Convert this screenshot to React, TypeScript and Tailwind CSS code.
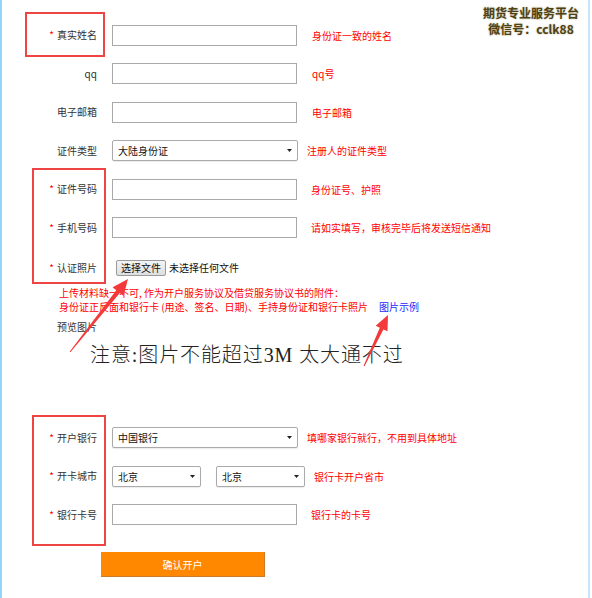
import React from "react";

const cjk = { fontFamily: '"Noto Sans CJK SC", "Liberation Sans", sans-serif' };

function Star() {
  return <span className="text-[#f00] mr-[3px] text-[10px]">*</span>;
}

function Label({ text, star }: { text: string; star?: boolean }) {
  return (
    <div className="w-[95px] shrink-0 text-right text-[10px] text-[#333] leading-none">
      {star && <Star />}
      {text}
    </div>
  );
}

function TextBox({ w = 185 }: { w?: number }) {
  return <div className="h-[21px] border border-[#a9a9a9] bg-white" style={{ width: w }} />;
}

function SelectBox({ value, w = 186 }: { value: string; w?: number }) {
  return (
    <div
      className="h-[21px] flex items-center justify-between pl-[5px] pr-[5px] border border-[#aaa] rounded-[2px] bg-white shadow-[0_1px_1px_rgba(0,0,0,0.08)]"
      style={{ width: w }}
    >
      <span className="text-[10px] text-[#111]">{value}</span>
      <svg width="5" height="3" viewBox="0 0 5 3">
        <path d="M0 0 L5 0 L2.5 3 Z" fill="#222" />
      </svg>
    </div>
  );
}

function Hint({ text, ml }: { text: string; ml: string }) {
  return <span className={`text-[10px] text-[#f00] ${ml}`}>{text}</span>;
}

export default function App() {
  return (
    <div className="relative w-[592px] h-[598px] bg-white overflow-hidden" style={cjk}>
      <div className="w-[590px] h-[598px] border-l-[2px] border-r-[2px] border-l-[#93d4f7] border-r-[#c6e5fa]">
        <div className="pt-[16px] flex flex-col">
          <div className="h-[38.5px] flex items-center">
            <Label text="真实姓名" star />
            <div className="ml-[15px]"><TextBox /></div>
            <Hint text="身份证一致的姓名" ml="ml-[15px]" />
          </div>
          <div className="h-[38.5px] flex items-center">
            <Label text="qq" />
            <div className="ml-[15px]"><TextBox /></div>
            <Hint text="qq号" ml="ml-[15px]" />
          </div>
          <div className="h-[38.5px] flex items-center">
            <Label text="电子邮箱" />
            <div className="ml-[15px]"><TextBox /></div>
            <Hint text="电子邮箱" ml="ml-[15px]" />
          </div>
          <div className="h-[38.5px] flex items-center">
            <Label text="证件类型" />
            <div className="ml-[15px]"><SelectBox value="大陆身份证" /></div>
            <Hint text="注册人的证件类型" ml="ml-[9px]" />
          </div>
          <div className="h-[38.5px] flex items-center">
            <Label text="证件号码" star />
            <div className="ml-[15px]"><TextBox /></div>
            <Hint text="身份证号、护照" ml="ml-[14px]" />
          </div>
          <div className="h-[38.5px] flex items-center">
            <Label text="手机号码" star />
            <div className="ml-[15px]"><TextBox /></div>
            <Hint text="请如实填写，审核完毕后将发送短信通知" ml="ml-[14px]" />
          </div>
          <div className="h-[38.5px] flex items-center pt-[3px]">
            <Label text="认证照片" star />
            <div className="ml-[19px] h-[16px] px-[4px] flex items-center border border-[#9a9a9a] rounded-[2px] bg-gradient-to-b from-[#f4f4f4] to-[#dedede] text-[10px] text-[#111]">
              选择文件
            </div>
            <span className="ml-[3px] text-[10px] text-[#111]">未选择任何文件</span>
          </div>

          {/* upload notes */}
          <div className="ml-[57px] text-[10px] leading-[14px] text-[#f00]">
            <div>上传材料缺一不可, 作为开户服务协议及借贷服务协议书的附件：</div>
            <div className="flex">
              <span>身份证正反面和银行卡 (用途、签名、日期)、手持身份证和银行卡照片</span>
              <span className="ml-[11px] text-[#2424ff]">图片示例</span>
            </div>
          </div>
          <div className="ml-[55px] mt-[6px] text-[10px] leading-[14px] text-[#333]">预览图片</div>
          <div
            className="ml-[88px] mt-[7px] text-[20px] leading-[28px] tracking-[0.9px] text-[#222] font-light"
            style={{ fontFamily: '"Liberation Serif", "Noto Sans CJK SC", serif' }}
          >
            注意:图片不能超过3M 太大通不过
          </div>

          {/* bank */}
          <div className="mt-[50px] h-[38.5px] flex items-center">
            <Label text="开户银行" star />
            <div className="ml-[15px]"><SelectBox value="中国银行" /></div>
            <Hint text="填哪家银行就行，不用到具体地址" ml="ml-[9px]" />
          </div>
          <div className="h-[38.5px] flex items-center">
            <Label text="开卡城市" star />
            <div className="ml-[15px]"><SelectBox value="北京" w={89} /></div>
            <div className="ml-[15px]"><SelectBox value="北京" w={89} /></div>
            <Hint text="银行卡开户省市" ml="ml-[9px]" />
          </div>
          <div className="h-[38.5px] flex items-center">
            <Label text="银行卡号" star />
            <div className="ml-[15px]"><TextBox /></div>
            <Hint text="银行卡的卡号" ml="ml-[14px]" />
          </div>

          <div className="ml-[99px] mt-[18px] w-[164px] h-[25px] flex items-center justify-center bg-[#ff8800] border-b border-r border-[#c77a2a] text-[10px] text-white">
            确认开户
          </div>
        </div>
      </div>

      {/* watermark */}
      <div className="absolute top-[5px] right-[13px] flex flex-col items-center text-[12px] leading-[16px] font-bold text-[#4e4114] [text-shadow:0_0_2px_#b3ab8a]">
        <div className="h-[16px]">期货专业服务平台</div>
        <div className="h-[16px]">微信号：cclk88</div>
      </div>

      {/* red annotation boxes */}
      <div className="absolute left-[25px] top-[12px] w-[80px] h-[45px] border-2 border-[#ef4444]" />
      <div className="absolute left-[32px] top-[168px] w-[74px] h-[116px] border-2 border-[#ef4444]" />
      <div className="absolute left-[32px] top-[415px] w-[74px] h-[131px] border-2 border-[#ef4444]" />

      {/* arrows */}
      <svg className="absolute left-0 top-0 pointer-events-none" width="592" height="598">
        <polygon
          fill="#f23a3a"
          points="70.4,352.3 119.8,292.9 123.5,295.9 128,279 112.6,287.2 116.3,290.2 69.6,351.7"
        />
        <polygon
          fill="#f23a3a"
          points="364.5,366.2 383.4,329.4 387.5,331.3 388,315 375.7,325.8 379.8,327.7 363.6,365.8"
        />
      </svg>
    </div>
  );
}
